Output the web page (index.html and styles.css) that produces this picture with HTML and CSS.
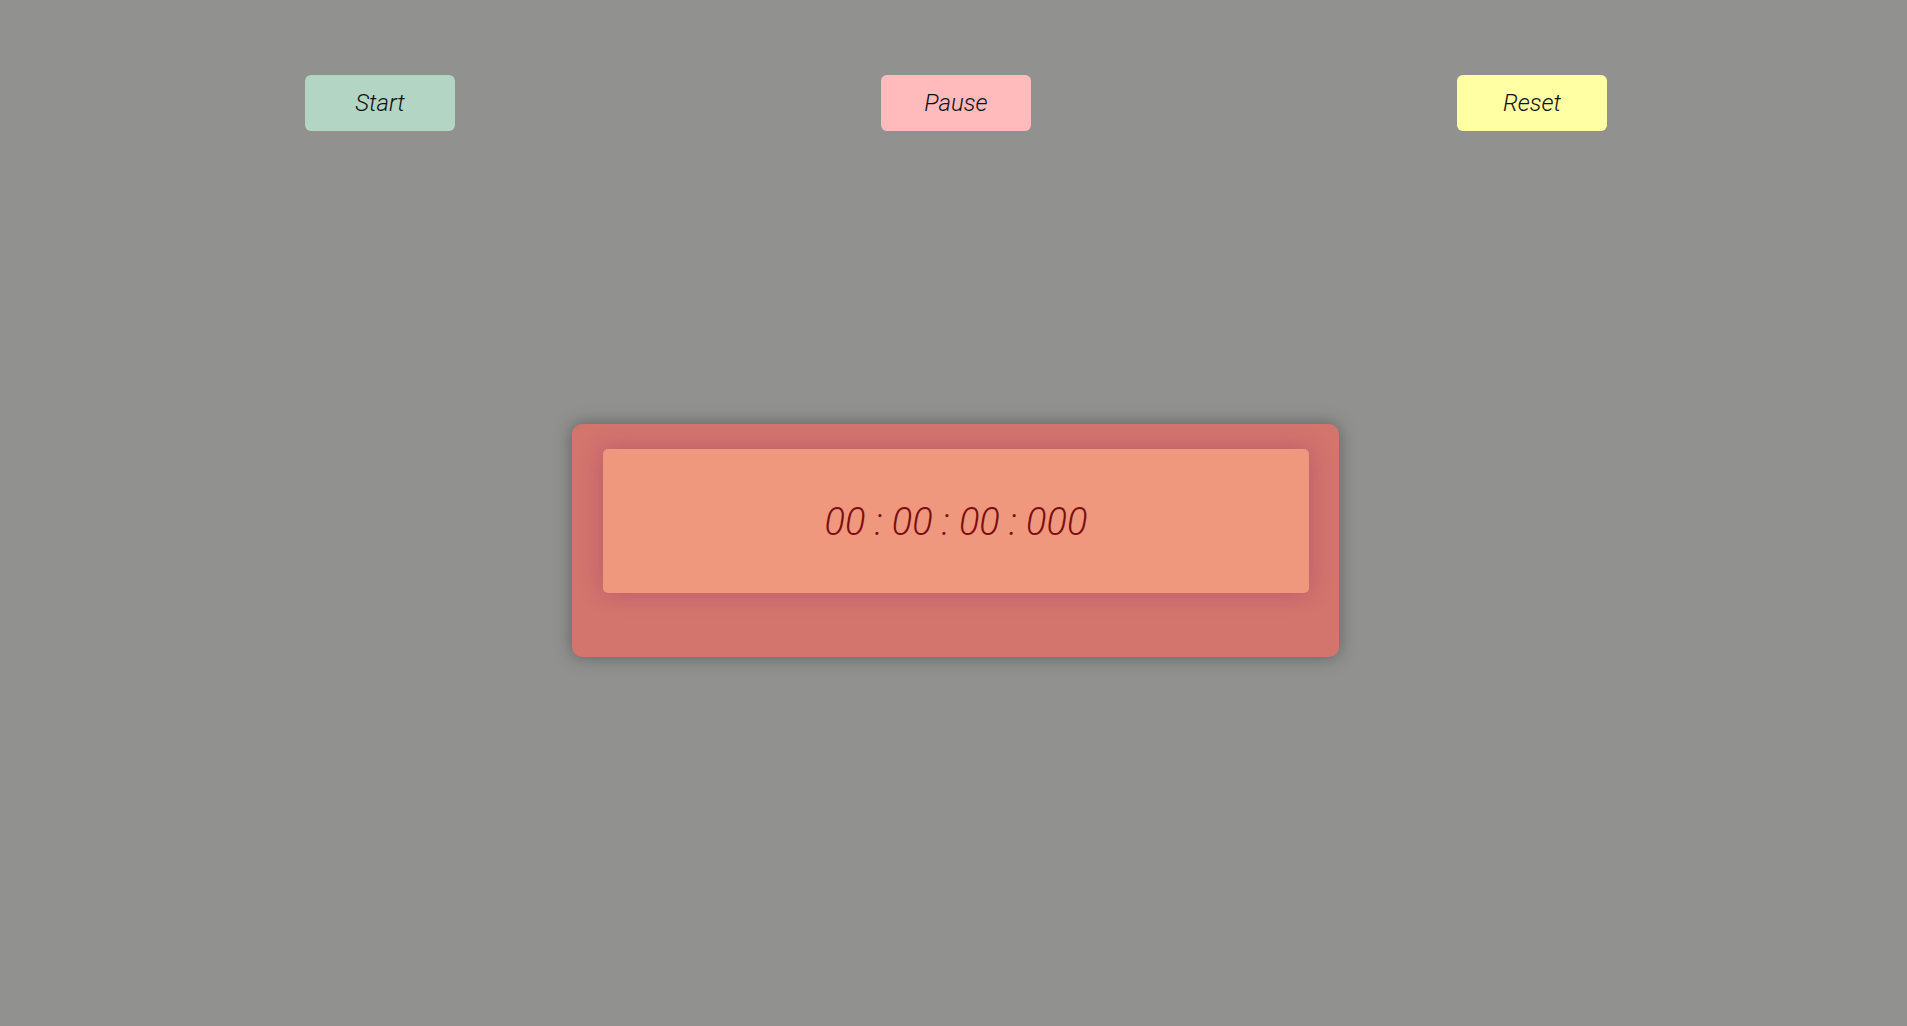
FILE: index.html
```html
<!DOCTYPE html>
<html>
<head>
<meta charset="utf-8">
<link rel="stylesheet" href="styles.css">
</head>
<body>
<div class="controls">
  <button class="btn btn-start">Start</button>
  <button class="btn btn-pause">Pause</button>
  <button class="btn btn-reset">Reset</button>
</div>
<div class="stage">
  <div class="timer">
    <div class="display">00 : 00 : 00 : 000</div>
  </div>
</div>
</body>
</html>
```

FILE: styles.css
```css
html, body {
  margin: 0;
  padding: 0;
  height: 100%;
}
body {
  background: #919190;
  font-family: Roboto, "Liberation Sans", sans-serif;
  overflow: hidden;
}
.controls {
  display: flex;
  justify-content: space-between;
  padding: 75px 300px 0 305px;
}
.btn {
  width: 150px;
  height: 56px;
  border: none;
  border-radius: 6px;
  font-family: Roboto, "Liberation Sans", sans-serif;
  font-style: italic;
  font-weight: 300;
  font-size: 24px;
  color: #111;
  padding: 0;
}
.btn-start { background: #b3d5c4; }
.btn-pause { background: #ffbbbb; }
.btn-reset { background: #ffffa3; }
.stage {
  display: flex;
  justify-content: center;
  padding-top: 293px;
  padding-left: 4px;
}
.timer {
  width: 706px;
  padding: 25px 30px 64px 31px;
  background: #d3746d;
  border-radius: 10px;
  box-shadow: 0 0 18px rgba(0, 0, 0, 0.35);
}
.display {
  height: 144px;
  box-sizing: border-box;
  padding-top: 2px;
  background: #f0987e;
  border-radius: 5px;
  display: flex;
  align-items: center;
  justify-content: center;
  font-style: italic;
  font-weight: 300;
  font-size: 38px;
  color: #7a0f0f;
  box-shadow: 0 0 22px rgba(150, 60, 110, 0.45);
}
```
